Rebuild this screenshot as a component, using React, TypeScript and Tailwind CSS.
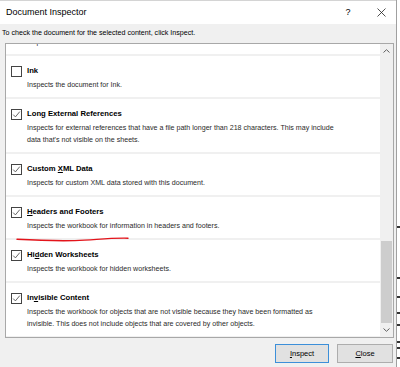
import { ReactNode } from "react";

type Item = {
    title: ReactNode;
    checked: boolean;
    desc: string[];
};

const items: Item[] = [
    { title: "Ink", checked: false, desc: ["Inspects the document for Ink."] },
    {
        title: "Long External References",
        checked: true,
        desc: [
            "Inspects for external references that have a file path longer than 218 characters. This may include",
            "data that's not visible on the sheets.",
        ],
    },
    {
        title: (
            <>
                Custom <u>X</u>ML Data
            </>
        ),
        checked: true,
        desc: ["Inspects for custom XML data stored with this document."],
    },
    {
        title: (
            <>
                <u>H</u>eaders and Footers
            </>
        ),
        checked: true,
        desc: ["Inspects the workbook for information in headers and footers."],
    },
    {
        title: (
            <>
                Hi<u>d</u>den Worksheets
            </>
        ),
        checked: true,
        desc: ["Inspects the workbook for hidden worksheets."],
    },
    {
        title: (
            <>
                In<u>v</u>isible Content
            </>
        ),
        checked: true,
        desc: [
            "Inspects the workbook for objects that are not visible because they have been formatted as",
            "invisible. This does not include objects that are covered by other objects.",
        ],
    },
];

function CheckBox({ checked }: { checked: boolean }) {
    return (
        <div className="w-[11px] h-[11px] border border-[#444] bg-white flex items-center justify-center shrink-0">
            {checked && (
                <svg width="9" height="9" viewBox="0 0 9 9">
                    <polyline
                        points="1.2,4.6 3.4,6.9 7.8,1.6"
                        fill="none"
                        stroke="#555"
                        strokeWidth="0.9"
                    />
                </svg>
            )}
        </div>
    );
}

function Row({ item }: { item: Item }) {
    return (
        <div className="pt-[7px] pb-[6px] border-b-2 border-[#f0f0f0]">
            <div className="h-[16px] flex items-center pl-[5px]">
                <CheckBox checked={item.checked} />
                <span className="ml-[5px] font-bold text-[7.7px] text-black">
                    {item.title}
                </span>
            </div>
            {item.desc.map((line) => (
                <div
                    key={line}
                    className="pl-[21px] leading-[12px] text-[7.1px] text-[#2a2a2a] whitespace-nowrap"
                >
                    {line}
                </div>
            ))}
        </div>
    );
}

export default function App() {
    return (
        <div
            className="relative w-[400px] h-[367px] flex bg-white overflow-hidden"
            style={{ fontFamily: '"Liberation Sans", Arial, sans-serif' }}
        >
            <div className="w-[397px] h-full flex flex-col bg-[#f0f0f0] border-r border-[#a0a0a0]">
                {/* title bar */}
                <div className="h-[24px] bg-white flex items-center border-t border-[#d4d4d4]">
                    <span className="ml-[6px] text-[9px] text-black">Document Inspector</span>
                    <span className="ml-auto text-[9px] text-black w-[10px] text-center">?</span>
                    <div className="ml-[23px] mr-[10px] w-[10px] flex items-center justify-center">
                        <svg width="9" height="9" viewBox="0 0 9 9">
                            <path d="M0.5 0.5 L8.5 8.5 M8.5 0.5 L0.5 8.5" stroke="#222" strokeWidth="0.8" />
                        </svg>
                    </div>
                </div>

                <div className="h-[19px] flex items-center pl-[2px] text-[7.1px] text-black">
                    To check the document for the selected content, click Inspect.
                </div>

                {/* list box */}
                <div className="ml-[5px] w-[389px] h-[295px] border border-[#a8a8a8] bg-white flex">
                    <div className="flex-1 overflow-hidden">
                        <div className="-mt-[8px]">
                            <div className="pb-[6px] border-b-2 border-[#f0f0f0]">
                                <div className="pl-[21px] leading-[12px] text-[7.1px] text-[#2a2a2a]">
                                    Inspects for hidden names.
                                </div>
                            </div>
                            {items.map((item, i) => (
                                <Row key={i} item={item} />
                            ))}
                        </div>
                    </div>
                    <div className="w-[13px] bg-[#f0f0f0] flex flex-col">
                        <div className="h-[14px] flex items-center justify-center">
                            <svg width="7" height="4" viewBox="0 0 7 4">
                                <polyline points="0.5,3.5 3.5,0.7 6.5,3.5" fill="none" stroke="#606060" strokeWidth="1" />
                            </svg>
                        </div>
                        <div className="flex-1 flex flex-col">
                            <div className="mt-[183px] flex-1 mx-[1px] bg-[#cdcdcd]" />
                        </div>
                        <div className="h-[14px] flex items-center justify-center">
                            <svg width="7" height="4" viewBox="0 0 7 4">
                                <polyline points="0.5,0.5 3.5,3.3 6.5,0.5" fill="none" stroke="#606060" strokeWidth="1" />
                            </svg>
                        </div>
                    </div>
                </div>

                {/* buttons */}
                <div className="mt-[6px] flex justify-end gap-[8px] pr-[3px]">
                    <button className="w-[54px] h-[19px] bg-[#e1e1e1] border-[1.5px] border-[#3c8fd9] text-[7.5px] text-black">
                        <u>I</u>nspect
                    </button>
                    <button className="w-[56px] h-[19px] bg-[#e1e1e1] border border-[#adadad] text-[7.5px] text-black">
                        <u>C</u>lose
                    </button>
                </div>
            </div>

            {/* edge of the window behind */}
            <div className="w-[3px] flex flex-col">
                <div className="mt-[226px] h-[2px] bg-[#333]" />
                <div className="mt-[49px] h-[2px] bg-[#333]" />
                <div className="mt-[17px] h-[2px] bg-[#333]" />
                <div className="mt-[14px] h-[2px] bg-[#333]" />
                <div className="mt-[10px] h-[2px] bg-[#333]" />
                <div className="mt-[15px] h-[2px] bg-[#333]" />
                <div className="mt-[4px] h-[2px] bg-[#333]" />
                <div className="mt-[8px] h-[2px] bg-[#333]" />
            </div>

            {/* red hand-drawn annotation */}
            <svg
                className="absolute left-0 top-0 pointer-events-none"
                width="400"
                height="367"
                viewBox="0 0 400 367"
            >
                <path
                    d="M17 239.3 C 35 240.3, 55 241, 75 240.6 S 105 237.8, 128 238.2"
                    fill="none"
                    stroke="#e3141b"
                    strokeWidth="1.4"
                    strokeLinecap="round"
                />
            </svg>
        </div>
    );
}
